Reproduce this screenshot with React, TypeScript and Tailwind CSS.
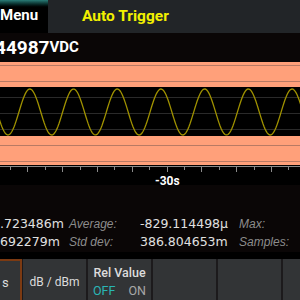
import React from "react";

const gridY = [3, 19, 35, 51, 67, 83, 99];

function Chart() {
  const pts: string[] = [];
  for (let x = -2; x <= 302; x += 1) {
    const y = 50 + 23 * Math.cos((2 * Math.PI * (x - 8)) / 43.7);
    pts.push(`${x},${y.toFixed(2)}`);
  }
  return (
    <svg width="300" height="104" className="block">
      <rect x="0" y="0" width="300" height="25" fill="#ffa07a" />
      <rect x="0" y="74" width="300" height="29" fill="#ffa07a" />
      {gridY.map((y) => {
        const inBand = y < 25 || (y > 74 && y < 103);
        return (
          <line
            key={y}
            x1="0"
            x2="300"
            y1={y + 0.5}
            y2={y + 0.5}
            stroke={inBand ? "#b87a64" : "#2a2a2a"}
            strokeWidth="1.2"
          />
        );
      })}
      <polyline points={pts.join(" ")} fill="none" stroke="#a09200" strokeWidth="1.3" />
    </svg>
  );
}

function Axis() {
  const ticks = Array.from({ length: 17 }, (_, i) => i);
  return (
    <div className="relative h-[19px]">
      <svg width="300" height="8" className="block">
        <line x1="0" x2="300" y1="0.5" y2="0.5" stroke="#8a8a8a" />
        {ticks.map((i) => {
          const x = Math.round(10 + 17.4 * i) + 0.5;
          return <line key={i} x1={x} x2={x} y1="0" y2={i % 2 ? 6 : 4} stroke="#8a8a8a" />;
        })}
      </svg>
      <div className="absolute left-[155px] top-[9px] text-[12px] font-bold leading-none text-white">-30s</div>
    </div>
  );
}

function Btn({ children, className = "" }: { children?: React.ReactNode; className?: string }) {
  return (
    <div className={`flex h-full flex-col items-center justify-center bg-[#323436] pt-[4px] text-[12px] text-[#dcdcdc] ${className}`}>
      {children}
    </div>
  );
}

const val = "font-['DejaVu_Sans',sans-serif] text-[12.5px] text-[#e0e0e0]";
const lbl = "font-['Liberation_Sans',sans-serif] text-[12px] italic text-[#8c8c8c]";

export default function App() {
  return (
    <div className="h-[300px] w-[300px] overflow-hidden bg-[#0a0606] font-['Roboto',sans-serif]">
      {/* header */}
      <div className="flex h-[33px]">
        <div className="flex w-[48px] items-center bg-gradient-to-b from-[#2a7d78] via-[#000] via-25% to-[#000] pb-[2px]">
          <span className="text-[15px] font-bold leading-none text-white">Menu</span>
        </div>
        <div className="flex flex-1 items-center bg-[#222528] pl-[34px]">
          <span className="text-[15.5px] font-bold leading-none text-[#f2f000]">Auto Trigger</span>
        </div>
      </div>

      {/* reading */}
      <div className="flex h-[29px] items-center whitespace-nowrap text-white">
        <span className="-ml-[5px] text-[19px] font-bold leading-none">44987</span>
        <span className="text-[15px] font-bold leading-none">VDC</span>
      </div>

      <div className="bg-black">
        <Chart />
        <Axis />
      </div>

      {/* stats */}
      <div className="flex h-[67px] flex-col gap-[4px] pt-[32px] leading-[14px]">
        <div className="flex whitespace-nowrap">
          <span className={`w-[69px] ${val}`}>.723486m</span>
          <span className={`w-[71px] ${lbl}`}>Average:</span>
          <span className={`w-[99px] ${val}`}>-829.114498µ</span>
          <span className={lbl}>Max:</span>
        </div>
        <div className="flex whitespace-nowrap">
          <span className={`w-[69px] ${val}`}>692279m</span>
          <span className={`w-[71px] ${lbl}`}>Std dev:</span>
          <span className={`w-[99px] ${val}`}>386.804653m</span>
          <span className={lbl}>Samples:</span>
        </div>
      </div>

      {/* softkeys */}
      <div className="h-[7px] bg-black" />
      <div className="flex h-[41px] bg-[#1c1a1c]">
        <Btn className="w-[22px] items-start border-r-2 border-t-2 border-[#7c3a12] pl-[2px]">
          <span className="text-[13px]">s</span>
        </Btn>
        <Btn className="ml-[1px] w-[63px] text-[12.5px]">dB / dBm</Btn>
        <Btn className="ml-[2px] w-[63px]">
          <span className="text-[12.5px] font-medium leading-[18px]">Rel Value</span>
          <span className="flex gap-[13px] text-[12.5px] leading-[18px]">
            <span className="text-[#2ab5b5]">OFF</span>
            <span className="text-[#a8a8a8]">ON</span>
          </span>
        </Btn>
        <Btn className="ml-[2px] w-[63px]" />
        <Btn className="ml-[2px] w-[63px]" />
        <Btn className="ml-[2px] flex-1" />
      </div>
    </div>
  );
}
